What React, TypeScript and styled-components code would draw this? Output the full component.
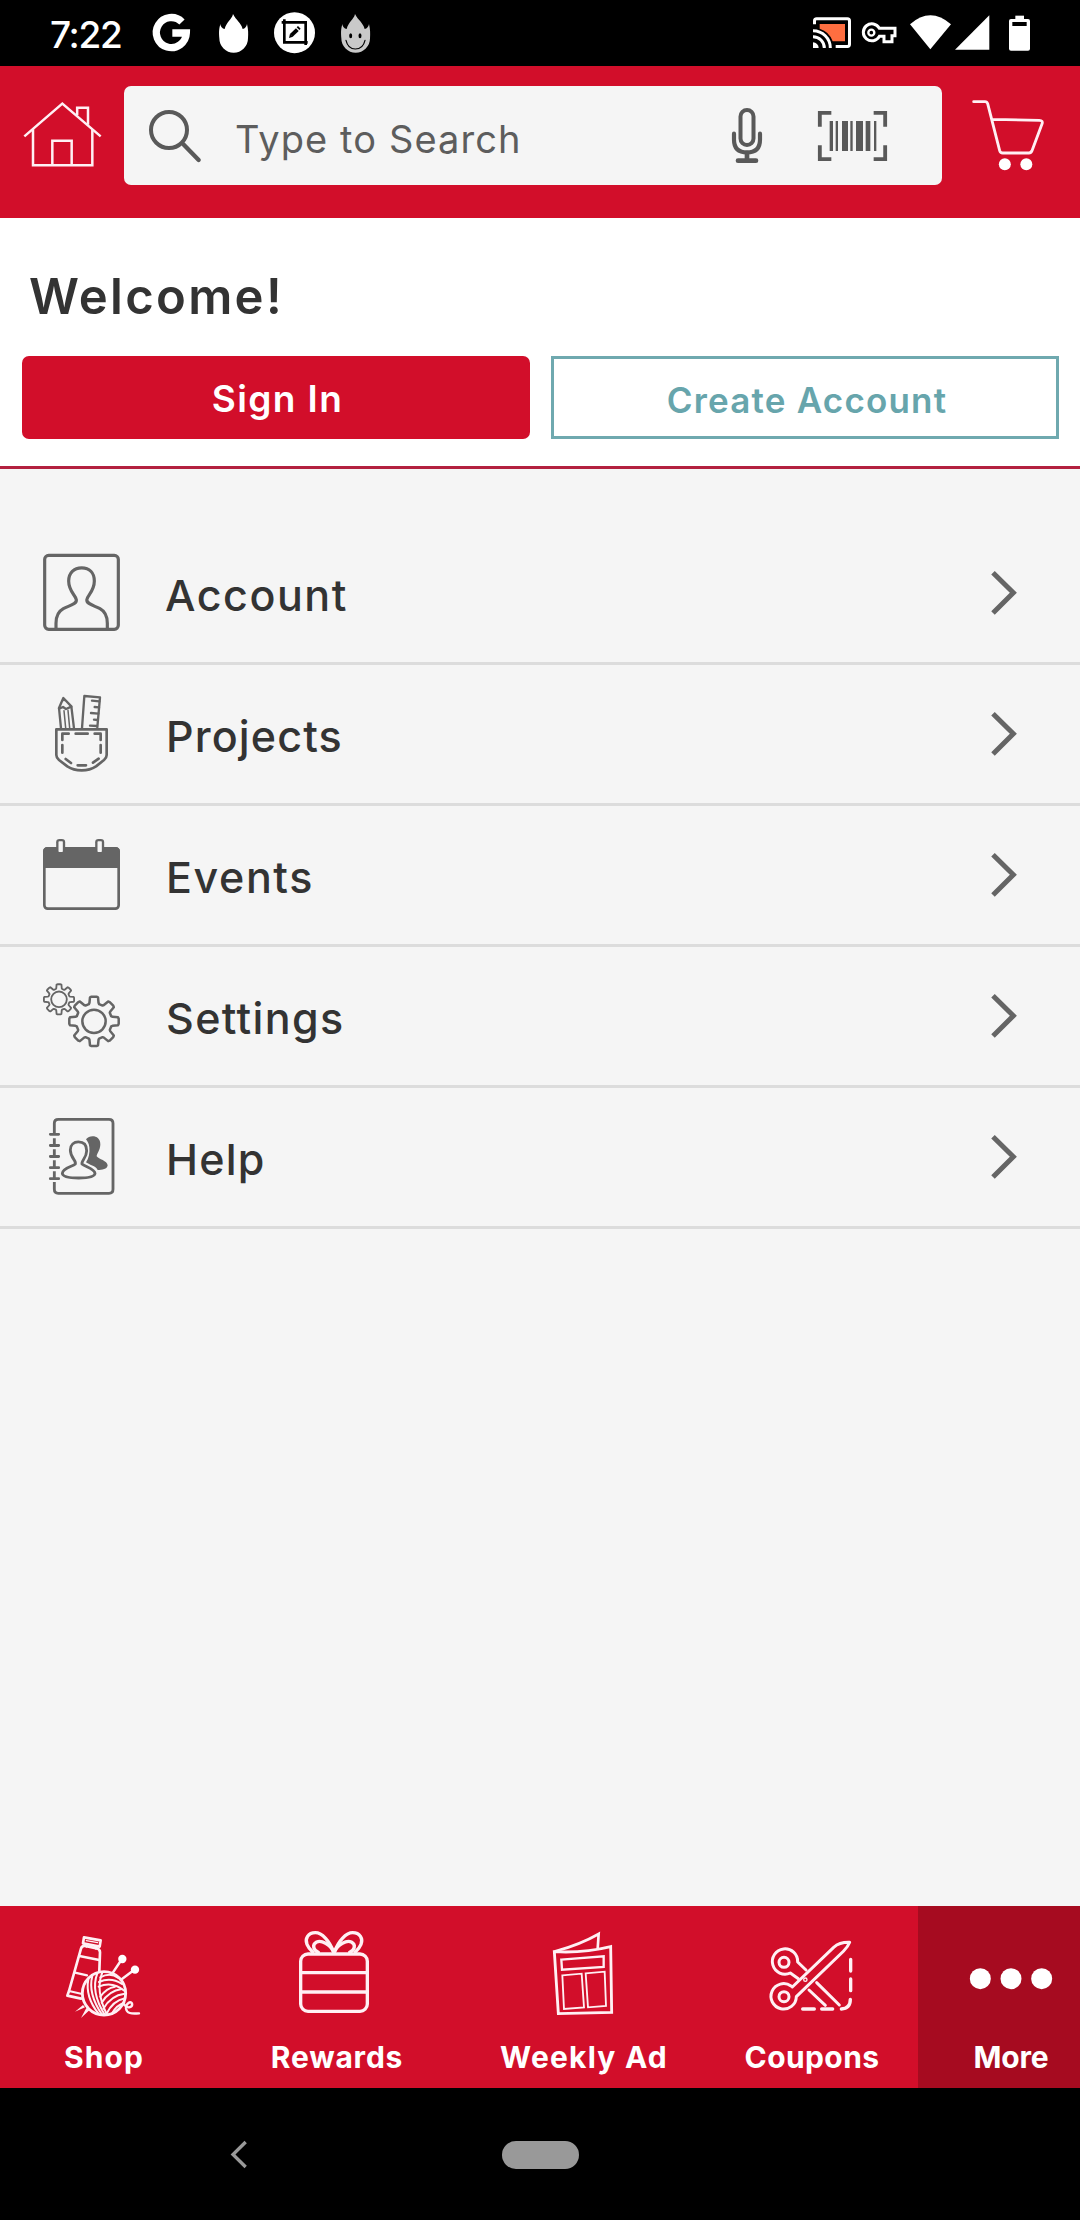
import React from "react";
import styled, { createGlobalStyle, css } from "styled-components";

const RED = "#d20e2a";
const GREY = "#656565";
const BLUSH = "#fff0f4";

const GlobalStyle = createGlobalStyle`
  body {
    margin: 0;
    background: #000;
    font-family: Inter, "Open Sans", sans-serif;
  }
  * { box-sizing: border-box; }
`;

const Screen = styled.div`
  width: 1080px;
  height: 2220px;
  display: flex;
  flex-direction: column;
  overflow: hidden;
  background: #f5f5f5;
`;

const StatusBar = styled.div`
  height: 66px;
  flex: none;
  display: flex;
  justify-content: space-between;
  background: #000;
  padding: 0 50px 0 50px;
`;

const StatusGroup = styled.div`
  display: flex;
  align-items: flex-start;
`;

const Clock = styled.span`
  width: 76px;
  font-size: 37px;
  font-weight: 550;
  line-height: 69px;
  letter-spacing: -1.3px;
  color: #fff;
  white-space: nowrap;
`;

const Art = styled.svg`
  display: block;
  flex: none;
  overflow: visible;
  fill: none;
  stroke-linecap: round;
  stroke-linejoin: round;
`;

/* Icons are drawn on a grid three times finer than the layout. */
const UNIT = 3;
type GlyphProps = { x: number; y: number; w: number; h: number; children: React.ReactNode };
const Glyph = ({ x, y, w, h, children }: GlyphProps) => (
  <Art viewBox={`${x} ${y} ${w} ${h}`} width={w / UNIT} height={h / UNIT} aria-hidden>
    {children}
  </Art>
);

const Header = styled.header`
  height: 152px;
  flex: none;
  display: flex;
  align-items: flex-start;
  background: ${RED};
  padding: 20px 0 0 24px;
`;

const HeaderAction = styled.button<{ $indent: number; $top: number }>`
  display: block;
  border: 0;
  background: none;
  padding: ${(p) => p.$top}px 0 0 ${(p) => p.$indent}px;
`;

const SearchBox = styled.div`
  width: 818px;
  height: 99px;
  margin-left: 23px;
  display: flex;
  align-items: center;
  border-radius: 7px;
  background: #f5f5f5;
  padding: 0 55px 0 25px;
`;

const Placeholder = styled.span`
  flex: 1;
  padding: 7px 0 0 34px;
  font-size: 38px;
  line-height: 44px;
  letter-spacing: 1.1px;
  color: #5d5d5d;
`;

const SearchTools = styled.div`
  display: flex;
  align-items: center;
  gap: 56px;
`;

const Welcome = styled.section`
  height: 251px;
  flex: none;
  display: flex;
  flex-direction: column;
  background: #fff;
  border-bottom: 3px solid #b3203f;
  padding: 49px 21px 0 22px;
`;

const Greeting = styled.h1`
  margin: 0 0 0 7px;
  font-size: 49px;
  font-weight: 600;
  line-height: 60px;
  letter-spacing: 2.3px;
  color: #333;
`;

const AuthButtons = styled.div`
  display: grid;
  grid-template-columns: 1fr 1fr;
  gap: 21px;
  margin-top: 29px;
`;

const AuthButton = styled.button<{ $primary?: boolean }>`
  height: 83px;
  font-family: inherit;
  font-weight: 600;
  ${(p) =>
    p.$primary
      ? css`
          border: 0;
          border-radius: 7px;
          background: ${RED};
          color: #fff;
          font-size: 37px;
          letter-spacing: 1.4px;
          padding: 2px 0 0 3px;
        `
      : css`
          border: 3px solid #6fa9af;
          background: #fff;
          color: #67a5ac;
          font-size: 35px;
          letter-spacing: 1.2px;
          padding: 4px 0 0 4px;
        `}
`;

const Menu = styled.nav`
  flex: 1;
  display: flex;
  flex-direction: column;
  padding-top: 55px;
`;

const MenuRow = styled.a`
  height: 141px;
  display: flex;
  align-items: center;
  border-bottom: 3px solid #dcdcdc;
  padding: 0 63px 0 43px;
`;

const MenuLabel = styled.span<{ $spacing: number; $indent: number }>`
  flex: 1;
  padding: 4px 0 0 ${(p) => p.$indent}px;
  font-size: 43px;
  font-weight: 550;
  line-height: 50px;
  letter-spacing: ${(p) => p.$spacing}px;
  color: #333;
`;

const TabBar = styled.nav`
  height: 182px;
  flex: none;
  display: grid;
  grid-template-columns: 205px 258px 240px 215px 186px;
  background: ${RED};
`;

const Tab = styled.a<{ $active?: boolean }>`
  display: flex;
  flex-direction: column;
  align-items: center;
  background: ${(p) => (p.$active ? "#a60b20" : "transparent")};
`;

const TabLabel = styled.span<{ $spacing: number; $shift: number }>`
  margin-top: 18px;
  padding-left: ${(p) => p.$shift}px;
  font-size: 30px;
  font-weight: 650;
  line-height: 38px;
  letter-spacing: ${(p) => p.$spacing}px;
  color: #fff;
  white-space: nowrap;
`;

const SystemNav = styled.div`
  height: 132px;
  flex: none;
  display: flex;
  align-items: flex-start;
  background: #000;
  padding: 53px 0 0 231px;
`;

const HomePill = styled.span`
  width: 77px;
  height: 28px;
  margin-left: 255px;
  border-radius: 14px;
  background: #999;
`;

const FLAME =
  "M698 42 C695 58 678 66 673 87 C666 86 660 80 660 72 C655 90 656 100 657 115 A43 43 0 0 0 743 115 C744 100 744 90 740 72 C739 80 734 86 727 87 C721 66 708 62 698 42Z";

const GoogleIcon = () => (
  <Glyph x={460} y={0} w={113} h={198}>
    <path d="M547 66 A45 45 0 1 0 560 99 H518" stroke="#fff" strokeWidth={22} strokeLinecap="butt" strokeLinejoin="miter" />
  </Glyph>
);
const FlameIcon = () => (
  <Glyph x={656} y={0} w={88} h={198}>
    <path d={FLAME} fill="#fff" />
  </Glyph>
);
const CropIcon = () => (
  <Glyph x={822} y={0} w={123} h={198}>
    <circle cx={883.5} cy={98} r={61.5} fill="#fff" />
    <g stroke="#000" strokeWidth={8} strokeLinecap="butt" strokeLinejoin="miter">
      <path d="M845 67 H917 V135" />
      <path d="M853 58 V127 H923" />
      <path d="M874 106 L892 89" strokeWidth={12} />
    </g>
    <path d="M867 114 L870 101 L879 110Z" fill="#000" />
    <path d="M894 78 L902 86 L898 90 L890 82Z" fill="#000" />
  </Glyph>
);
const SmileIcon = () => (
  <Glyph x={1024} y={0} w={87} h={198}>
    <path d={FLAME} transform="translate(368 0)" fill="#c9c9c9" />
    <ellipse cx={1053} cy={107} rx={4.500} ry={7.500} fill="#000" />
    <ellipse cx={1081} cy={107} rx={4.500} ry={7.500} fill="#000" />
    <path d="M1039 121 Q1045 147 1067 147 Q1090 147 1096 121" stroke="#000" strokeWidth={3.500} />
  </Glyph>
);

const CastIcon = () => (
  <Glyph x={100} y={0} w={114} h={198}>
    <path d="M120 72 H196 V124 H159 A59 59 0 0 0 120 86Z" fill="#ff6e40" />
    <g stroke="#fff" strokeWidth={9} strokeLinecap="butt">
      <path d="M104.500 73 V62 Q104.500 56 111 56 H203 Q209.500 56 209.500 62 V133 Q209.500 139.500 203 139.500 H168" />
      <path d="M100 92 A52 52 0 0 1 152 144" />
      <path d="M100 110 A34 34 0 0 1 134 144" />
    </g>
    <path d="M100 127 A17 17 0 0 1 117 144 H100Z" fill="#fff" />
  </Glyph>
);
const KeyIcon = () => (
  <Glyph x={247} y={0} w={104} h={198}>
    <path
      d="M299 85 H346 V107 H337 V125 H313 V109 H299 A25.500 25.500 0 1 1 299 85Z"
      stroke="#fff"
      strokeWidth={9}
      strokeLinejoin="miter"
    />
    <circle cx={275} cy={98} r={9} stroke="#fff" strokeWidth={7} />
  </Glyph>
);
const WifiIcon = () => (
  <Glyph x={390} y={0} w={123} h={198}>
    <path d="M390 73 Q451 19 513 73 L451 148Z" fill="#fff" />
  </Glyph>
);
const SignalIcon = () => (
  <Glyph x={524} y={0} w={103} h={198}>
    <path d="M627 46 V149 H524Z" fill="#fff" />
  </Glyph>
);
const BatteryIcon = () => (
  <Glyph x={687} y={0} w={63} h={198}>
    <rect x={687} y={57} width={63} height={95} rx={6} fill="#fff" />
    <rect x={706} y={47} width={26} height={14} fill="#fff" />
    <rect x={697} y={66} width={43} height={12} fill="#000" />
  </Glyph>
);

const HouseIcon = () => (
  <Glyph x={72} y={306} w={231} h={194}>
    <g stroke={BLUSH} strokeWidth={7.500} strokeLinecap="butt" strokeLinejoin="miter">
      <path d="M73 409 L187 311 L302 409" />
      <path d="M99 388 V495.500 H277 V388" />
      <path d="M157 495 V422 H215 V495" />
      <path d="M231.500 346 V323 H264 V374" />
    </g>
  </Glyph>
);
const SearchIcon = () => (
  <Glyph x={447} y={330} w={156} h={156}>
    <g stroke="#595959">
      <circle cx={507} cy={390} r={54} strokeWidth={12} />
      <path d="M550 433 L596 480" strokeWidth={13} />
    </g>
  </Glyph>
);
const MicIcon = () => (
  <Glyph x={1026} y={87} w={90} h={165}>
    <g stroke="#595959">
      <rect x={1051.500} y={93} width={39} height={105} rx={19.500} strokeWidth={12} />
      <path d="M1032 164 V182 Q1032 220 1071 220 Q1110 220 1110 182 V164" strokeWidth={12.500} />
      <path d="M1071 222 V244 M1044 245 H1098" strokeWidth={14} />
    </g>
  </Glyph>
);
const BARS = [[149, 10], [167, 7], [186, 18], [211, 7], [228, 21], [257, 14], [282, 7]];
const BarcodeIcon = () => (
  <Glyph x={114} y={333} w={207} h={150}>
    <path
      d="M119.500 380 V338.500 H154 M281 338.500 H315.500 V380 M119.500 436 V477.500 H154 M315.500 436 V477.500 H281"
      stroke="#595959"
      strokeWidth={11.500}
      strokeLinecap="butt"
      strokeLinejoin="miter"
    />
    {BARS.map(([x, w]) => (
      <rect key={x} x={x} y={363} width={w} height={90} fill="#595959" />
    ))}
  </Glyph>
);
const CartIcon = () => (
  <Glyph x={578} y={299} w={212} h={212}>
    <path
      d="M580 304 H614 Q620 304 622 310 L658 451 Q660 458 667 458 H746 Q752 458 755 451 L785 371 Q789 360 777 360 L637 357"
      stroke={BLUSH}
      strokeWidth={8.500}
    />
    <circle cx={673.500} cy={492} r={18} fill="#fff" />
    <circle cx={738} cy={492} r={18} fill="#fff" />
  </Glyph>
);

const ChevronIcon = () => (
  <Glyph x={153} y={120} w={78} h={138}>
    <path d="M159 128 L220 188.500 L159 249" stroke={GREY} strokeWidth={15} strokeLinecap="butt" strokeLinejoin="miter" />
  </Glyph>
);

const AccountIcon = () => (
  <Glyph x={129} y={-18} w={231} h={414}>
    <g stroke={GREY} strokeWidth={9.500}>
      <rect x={134} y={76} width={221} height={222} rx={12} />
      <path
        strokeLinecap="butt"
        d="M168 297 V280 Q168 248 190 236 C210 226 231 222 229 209 C227 196 206 184 206 153 C206 128 222 113.500 245 113.500 C268 113.500 283 128 283 153 C283 184 262 196 260.500 209 C259 222 280 226 300 236 Q322 248 322 280 V297"
      />
    </g>
  </Glyph>
);
const ProjectsIcon = () => (
  <Glyph x={129} y={405} w={231} h={414}>
    <g stroke={GREY} strokeWidth={7}>
      <path d="M183 595 L177 534 L190 504 L214 529 L222 595" />
      <path d="M177 536 L189 531 L198 537 L214 530" />
      <path d="M192 542 L197 594 M204 541 L209 594" strokeWidth={4.500} />
      <path d="M187 511 L190 505 L196 511Z" fill={GREY} strokeWidth={3} />
      <path d="M246 595 L253 498 L300 502 L292 592" />
      <path d="M298 514 L276 512 M297 532 L284 531 M295 551 L273 549 M293 570 L282 569 M291 588 L270 587" />
    </g>
    <path d="M169 598 H320 V675 Q320 683 312 690 L288 709 Q270 721 245 721 Q220 721 202 709 L177 690 Q169 683 169 675Z" stroke={GREY} strokeWidth={8} />
    <path
      stroke={GREY}
      strokeWidth={8}
      d="M206 611 H187 V630 M227 611 H263 M284 611 H302 V630 M187 645 V668 M302 645 V668 M197 687 L213 699 M233 706 H258 M279 698 L296 686"
    />
  </Glyph>
);
const EventsIcon = () => (
  <Glyph x={129} y={18} w={231} h={414}>
    <rect x={133} y={145} width={223} height={181} rx={10} stroke={GREY} strokeWidth={8} />
    <path d="M129 204 V155 Q129 141 143 141 H346 Q360 141 360 155 V204Z" fill={GREY} />
    {[182, 299].map((cx) => (
      <g key={cx}>
        <rect x={cx - 13.500} y={117} width={27} height={38} rx={10} fill={GREY} />
        <rect x={cx - 6.500} y={124} width={13} height={32} rx={2} fill="#f5f5f5" />
      </g>
    ))}
  </Glyph>
);

const gear = (cx: number, cy: number, outer: number, root: number) => {
  const pts: string[] = [];
  for (let i = 0; i < 8; i++) {
    const a = (i * Math.PI) / 4;
    const at = (r: number, d: number) =>
      `${(cx + r * Math.cos(a + d)).toFixed(1)} ${(cy + r * Math.sin(a + d)).toFixed(1)}`;
    pts.push(at(root * 0.98, -0.29), at(root * 1.04, -0.24), at(outer * 0.98, -0.165), at(outer, -0.1));
    pts.push(at(outer, 0.1), at(outer * 0.98, 0.165), at(root * 1.04, 0.24), at(root * 0.98, 0.29));
  }
  return `M${pts.join(" L")}Z`;
};
const SettingsIcon = () => (
  <Glyph x={129} y={441} w={231} h={414}>
    <g stroke={GREY}>
      <path d={gear(177, 598, 45.5, 33)} strokeWidth={5.500} />
      <circle cx={177} cy={598} r={23.500} strokeWidth={5.500} />
      <path d={gear(282, 664, 74.5, 55)} strokeWidth={7.500} />
      <circle cx={282} cy={664} r={35} strokeWidth={7.500} />
    </g>
  </Glyph>
);
const HelpIcon = () => (
  <Glyph x={129} y={864} w={231} h={414}>
    <g stroke={GREY} strokeWidth={8.500} strokeLinecap="butt">
      <path d="M163 1003 V970 Q163 958 175 958 H327 Q339 958 339 970 V1168 Q339 1180 327 1180 H175 Q163 1180 163 1168 V1146" />
      <path d="M163 1015 V1036 M163 1048 V1069 M163 1081 V1103 M163 1114 V1136" />
      <path
        strokeLinecap="round"
        d="M151 1003 H176 M151 1036.500 H176 M151 1069.500 H176 M151 1103 H176 M151 1136 H176"
      />
      <path d="M187 1120 C188 1104 218 1100 226 1092 C230 1082 211 1074 211 1050 C211 1034 222 1025.500 235 1025.500 C250 1025.500 260 1034 260 1052 C260 1074 243 1082 246 1092 C254 1100 284 1106 285 1120 C284 1130 262 1134 236 1134 C210 1134 188 1130 187 1120Z" />
    </g>
    <path
      fill={GREY}
      d="M258 1018 C270 1003 302 1006 301 1034 C300 1052 290 1060 290 1069 C296 1078 322 1082 323 1096 C322 1108 306 1110 293 1110 C288 1098 266 1094 258 1087 C266 1076 270 1060 268 1042 C267 1030 262 1024 258 1018Z"
    />
  </Glyph>
);

const ShopIcon = () => (
  <Glyph x={195} y={48} w={222} h={342}>
    <g stroke={BLUSH} strokeWidth={8}>
      <path d="M249 142 L299 151 L296 170 L246 160Z" />
      <path d="M256 152 L290 158" strokeWidth={4} />
      <path d="M258 164 L256 169 M286 170 L285 175" />
      <path d="M295 243 L297 187 Q297 178 287 175 L253 168 Q243 166 240 176 L204 303 L199 317 L240 326" />
      <path d="M204 303 L240 311" strokeWidth={6} />
      <path d="M235 198 L295 210 M222 248 L258 256" strokeWidth={7} />
      <circle cx={309} cy={310} r={65} strokeWidth={8.500} />
      <path d="M334 250 L361 210 M362 268 L398 241" strokeWidth={7.500} />
    </g>
    <circle cx={364} cy={207} r={12.500} fill="#fff" />
    <circle cx={402} cy={239} r={12.500} fill="#fff" />
    <g stroke={BLUSH} strokeWidth={6}>
      <path d="M262 268 Q252 320 292 370 M274 258 Q260 310 303 374 M289 250 Q268 304 311 374 M304 247 Q282 302 318 374" />
      <path d="M298 262 Q328 246 352 264 M294 276 Q330 260 363 282 M293 290 Q335 272 372 304" />
      <path d="M298 320 Q316 294 342 290 M302 338 Q324 302 362 297 M307 356 Q330 316 371 311 M316 372 Q336 332 372 325 M332 372 Q346 345 370 338" />
    </g>
    <path d="M222 365 L246 345 L252 352Z M240 384 L256 354 L265 361Z" fill={BLUSH} />
    <path d="M368 343 C382 360 396 350 393 340 C388 331 374 342 375 356 C377 370 390 372 414 370" stroke={BLUSH} strokeWidth={7} />
  </Glyph>
);
const Bow = () => (
  <g>
    <path d="M1001 186 C988 152 966 128 946 128 C924 128 914 146 921 163 Q926 175 938 186" />
    <path d="M1001 186 C990 162 964 150 950 156 C935 164 940 181 955 187" />
  </g>
);
const RewardsIcon = () => (
  <Glyph x={897} y={48} w={210} h={342}>
    <g stroke={BLUSH} strokeWidth={10}>
      <rect x={902} y={192} width={200} height={172} rx={22} />
      <path d="M902 248 H1102 M902 306 H1102" />
      <Bow />
      <g transform="translate(2004 0) scale(-1 1)">
        <Bow />
      </g>
    </g>
  </Glyph>
);
const WeeklyAdIcon = () => (
  <Glyph x={339} y={48} w={180} h={342}>
    <g stroke={BLUSH} strokeLinejoin="miter">
      <path d="M343 185 Q430 190 512 170 L515 367 L355 371Z" strokeWidth={8.500} />
      <path d="M346 184 Q420 164 476 132 L473 176" strokeWidth={8} />
      <path d="M364 209 L491 199 V231 L366 239Z" strokeWidth={7} />
      <path d="M367 256 L425 251 L432 352 L372 357Z M437 250 L494 245 L498 348 L444 352Z" strokeWidth={5.500} />
    </g>
  </Glyph>
);
const CouponsIcon = () => (
  <Glyph x={987} y={48} w={246} h={342}>
    <g stroke={BLUSH} strokeWidth={9}>
      <path d="M1095 240 L1070 216 A38 38 0 1 0 1048 249 L1072 266" />
      <path d="M1054 291 L1178 172 Q1196 156 1226 157 Q1221 170 1208 183 L1066 320 A38 38 0 1 1 1050 288" />
      <circle cx={1029} cy={217} r={15} />
      <circle cx={1029} cy={320} r={15} />
      <circle cx={1093} cy={269} r={5} strokeWidth={4} />
      <path d="M1127 278 L1195 345 M1104 300 L1153 346" />
      <path d="M1229 208 V243 M1229 267 V302 M1228 328 Q1228 356 1201 357 M1085 357 H1120 M1142 357 H1175" strokeWidth={10} />
    </g>
  </Glyph>
);
const MoreIcon = () => (
  <Glyph x={330} y={48} w={246} h={342}>
    {[361, 453, 545].map((cx) => (
      <circle key={cx} cx={cx} cy={266} r={31.500} fill="#fff" />
    ))}
  </Glyph>
);

const BackIcon = () => (
  <Glyph x={93} y={153} w={48} h={81}>
    <path d="M137 156 L99 193.500 L137 231" stroke="#999" strokeWidth={10} strokeLinecap="butt" strokeLinejoin="miter" />
  </Glyph>
);

const Pad = styled.span<{ $left: number }>`
  display: block;
  margin-left: ${(p) => p.$left}px;
`;

const MENU = [
  { label: "Account", spacing: 1.55, indent: 45, Icon: AccountIcon },
  { label: "Projects", spacing: 1.15, indent: 46, Icon: ProjectsIcon },
  { label: "Events", spacing: 1.6, indent: 46, Icon: EventsIcon },
  { label: "Settings", spacing: 1.35, indent: 46, Icon: SettingsIcon },
  { label: "Help", spacing: 1.2, indent: 46, Icon: HelpIcon },
];

const TABS = [
  { label: "Shop", spacing: 1.1, shift: 3, Icon: ShopIcon },
  { label: "Rewards", spacing: 0.8, shift: 6, Icon: RewardsIcon },
  { label: "Weekly Ad", spacing: 1.2, shift: 2, Icon: WeeklyAdIcon },
  { label: "Coupons", spacing: 0.4, shift: 3, Icon: CouponsIcon },
  { label: "More", spacing: -0.2, shift: 0, Icon: MoreIcon, active: true },
];

export default function App() {
  return (
    <Screen>
      <GlobalStyle />
      <StatusBar>
        <StatusGroup>
          <Clock>7:22</Clock>
          <Pad $left={27}><GoogleIcon /></Pad>
          <Pad $left={28}><FlameIcon /></Pad>
          <Pad $left={26}><CropIcon /></Pad>
          <Pad $left={26}><SmileIcon /></Pad>
        </StatusGroup>
        <StatusGroup>
          <CastIcon />
          <Pad $left={11}><KeyIcon /></Pad>
          <Pad $left={13}><WifiIcon /></Pad>
          <Pad $left={4}><SignalIcon /></Pad>
          <Pad $left={20}><BatteryIcon /></Pad>
        </StatusGroup>
      </StatusBar>

      <Header>
        <HeaderAction $indent={0} $top={16} aria-label="Home">
          <HouseIcon />
        </HeaderAction>
        <SearchBox>
          <SearchIcon />
          <Placeholder>Type to Search</Placeholder>
          <SearchTools>
            <MicIcon />
            <BarcodeIcon />
          </SearchTools>
        </SearchBox>
        <HeaderAction $indent={31} $top={14} aria-label="Cart">
          <CartIcon />
        </HeaderAction>
      </Header>

      <Welcome>
        <Greeting>Welcome!</Greeting>
        <AuthButtons>
          <AuthButton $primary>Sign In</AuthButton>
          <AuthButton>Create Account</AuthButton>
        </AuthButtons>
      </Welcome>

      <Menu>
        {MENU.map(({ label, spacing, indent, Icon }) => (
          <MenuRow key={label}>
            <Icon />
            <MenuLabel $spacing={spacing} $indent={indent}>{label}</MenuLabel>
            <ChevronIcon />
          </MenuRow>
        ))}
      </Menu>

      <TabBar>
        {TABS.map(({ label, spacing, shift, Icon, active }) => (
          <Tab key={label} $active={active}>
            <Icon />
            <TabLabel $spacing={spacing} $shift={shift}>{label}</TabLabel>
          </Tab>
        ))}
      </TabBar>

      <SystemNav>
        <BackIcon />
        <HomePill />
      </SystemNav>
    </Screen>
  );
}
